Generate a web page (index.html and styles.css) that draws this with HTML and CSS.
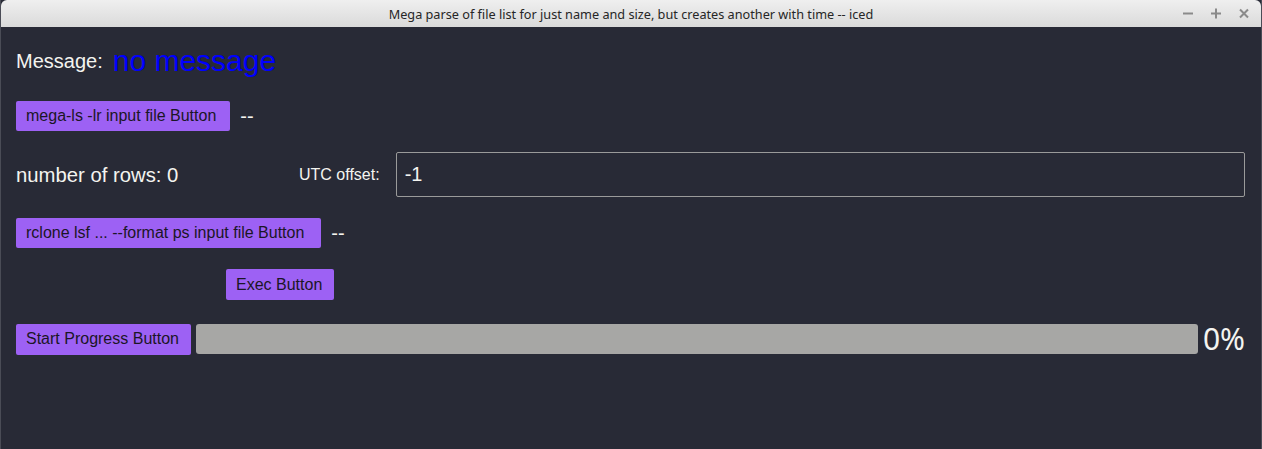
FILE: index.html
```html
<!DOCTYPE html>
<html>
<head>
<meta charset="utf-8">
<link rel="stylesheet" href="styles.css">
</head>
<body>
<div class="window">
  <header class="titlebar">
    <span class="title">Mega parse of file list for just name and size, but creates another with time -- iced</span>
    <div class="controls">
      <svg width="12" height="12" viewBox="0 0 12 12"><path d="M1 6.5h10" stroke="#8a8a8a" stroke-width="2"/></svg>
      <svg width="12" height="12" viewBox="0 0 12 12"><path d="M1 6.5h10M6 1.5v10" stroke="#8a8a8a" stroke-width="2"/></svg>
      <svg width="12" height="12" viewBox="0 0 12 12"><path d="M2 2.5l8 8M10 2.5l-8 8" stroke="#8a8a8a" stroke-width="2"/></svg>
    </div>
  </header>
  <main class="content">
    <div class="row msg-row">
      <span class="label-lg">Message:</span>
      <span class="message">no message</span>
    </div>
    <div class="row">
      <button class="btn btn-mega">mega-ls -lr input file Button</button>
      <span class="dash">--</span>
    </div>
    <div class="row utc-row">
      <span class="label-lg rows">number of rows: 0</span>
      <span class="label-sm">UTC offset:</span>
      <div class="input">-1</div>
    </div>
    <div class="row">
      <button class="btn btn-rclone">rclone lsf ... --format ps input file Button</button>
      <span class="dash">--</span>
    </div>
    <div class="row exec-row">
      <button class="btn">Exec Button</button>
    </div>
    <div class="row progress-row">
      <button class="btn">Start Progress Button</button>
      <div class="bar"></div>
      <span class="pct">0%</span>
    </div>
  </main>
</div>
</body>
</html>
```

FILE: styles.css
```css
* { box-sizing: border-box; }
html, body {
  margin: 0;
  padding: 0;
  width: 1262px;
  height: 449px;
  overflow: hidden;
  background: #282a36;
}
.window {
  width: 1262px;
  height: 449px;
  display: flex;
  flex-direction: column;
  background: #282a36;
  border-left: 1px solid #4a4c56;
  border-right: 1px solid #4a4c56;
  font-family: "Liberation Sans", Arial, sans-serif;
}
.titlebar {
  height: 27px;
  flex: none;
  background: linear-gradient(#efefef, #dadada);
  border-radius: 6px 6px 0 0;
  display: flex;
  align-items: center;
  justify-content: center;
  position: relative;
}
.title {
  font-family: "Noto Sans", "Open Sans", sans-serif;
  font-size: 12.7px;
  color: #262626;
}
.controls {
  position: absolute;
  right: 11px;
  top: 7px;
  display: flex;
  gap: 16px;
}
.controls svg { display: block; }
.content {
  padding: 14px 16px 0 15px;
  display: flex;
  flex-direction: column;
  gap: 21px;
}
.row {
  display: flex;
  align-items: center;
}
.msg-row {
  height: 39px;
  gap: 10px;
}
.label-lg {
  font-size: 20px;
  line-height: 26px;
  color: #f4f4f0;
}
.message {
  font-size: 30px;
  line-height: 39px;
  color: #0000ff;
}
.btn {
  font-family: "Liberation Sans", Arial, sans-serif;
  font-size: 16px;
  line-height: 20px;
  height: 30px;
  padding: 5px 12px 5px 10px;
  background: #9d61f4;
  color: #1b1626;
  border: none;
  border-radius: 2px;
  margin: 0;
}
.btn-mega { padding-right: 14px; }
.btn-rclone { padding-right: 17px; }
.dash {
  font-size: 20px;
  color: #f4f4f0;
  margin-left: 10px;
}
.utc-row { height: 45px; }
.rows { width: 283px; font-size: 20.3px; }
.label-sm {
  font-size: 16px;
  color: #f4f4f0;
  margin-right: 16px;
}
.input {
  flex: 1;
  height: 45px;
  border: 1px solid #9a9a9a;
  border-radius: 2px;
  padding: 0 8px;
  display: flex;
  align-items: center;
  font-size: 20px;
  color: #f4f4f0;
}
.exec-row {
  padding-left: 210px;
  height: 31px;
}
.exec-row .btn { height: 31px; }
.progress-row {
  height: 36px;
  gap: 5px;
}
.progress-row .btn { height: 31px; }
.bar {
  flex: 1;
  height: 30px;
  background: #a7a7a5;
  border-radius: 3px;
}
.pct {
  font-family: "Noto Sans", "Open Sans", sans-serif;
  font-size: 30px;
  line-height: 36px;
  color: #f4f4f0;
}
```
